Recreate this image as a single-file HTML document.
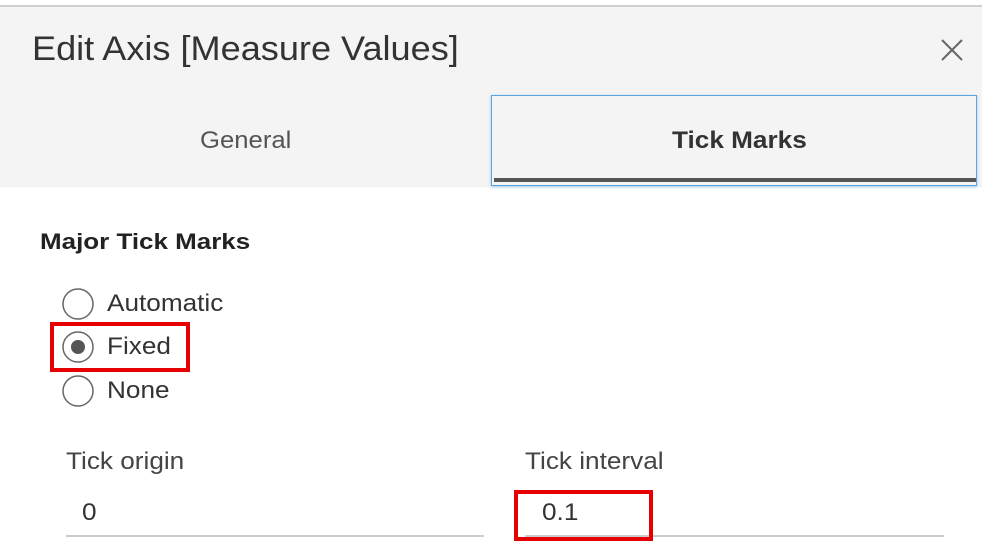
<!DOCTYPE html>
<html><head><style>
body{margin:0;width:982px;height:553px;background:#fff;position:relative;overflow:hidden;font-family:"Liberation Sans",sans-serif;}
.a{position:absolute;white-space:nowrap;transform-origin:left;}
.t{font-size:24px;color:#333;transform:scaleX(1.09);}
</style></head><body>
<div class="a" style="left:0;top:5px;width:982px;height:2px;background:#cfcfcf"></div>
<div class="a" style="left:0;top:7px;width:982px;height:180px;background:#f4f4f4"></div>
<div class="a" style="left:32px;top:30px;font-size:34px;color:#333;transform:scaleX(1.062)">Edit Axis [Measure Values]</div>
<svg class="a" style="left:940px;top:38px" width="24" height="24"><path d="M2 2L22 22M22 2L2 22" stroke="#666" stroke-width="2"/></svg>
<div class="a" style="left:491px;top:95px;width:484px;height:89px;border:1px solid #5aa5e0;background:#f4f4f4;box-shadow:0 1px 3px #9cc8ee"></div>
<div class="a" style="left:494px;top:178px;width:482px;height:4px;background:#555"></div>
<div class="a" style="left:200px;top:127px;font-size:24px;color:#555;transform:scaleX(1.07)">General</div>
<div class="a" style="left:672px;top:127px;font-size:24px;color:#333;font-weight:bold;transform:scaleX(1.09)">Tick Marks</div>
<div class="a" style="left:40px;top:229px;font-size:22px;color:#222;font-weight:bold;transform:scaleX(1.18)">Major Tick Marks</div>
<svg class="a" style="left:60px;top:286px" width="36" height="125">
<circle cx="18" cy="18" r="15" fill="#fff" stroke="#666" stroke-width="1.5"/>
<circle cx="18" cy="61" r="15" fill="#fff" stroke="#666" stroke-width="1.5"/>
<circle cx="18" cy="61" r="7" fill="#555"/>
<circle cx="18" cy="105" r="15" fill="#fff" stroke="#666" stroke-width="1.5"/>
</svg>
<div class="a t" style="left:107px;top:290px">Automatic</div>
<div class="a t" style="left:107px;top:333px">Fixed</div>
<div class="a t" style="left:107px;top:377px">None</div>
<div class="a" style="left:50px;top:322px;width:132px;height:42px;border:4px solid #e60000"></div>
<div class="a t" style="left:66px;top:448px;color:#444">Tick origin</div>
<div class="a t" style="left:525px;top:448px;color:#444">Tick interval</div>
<div class="a t" style="left:82px;top:499px">0</div>
<div class="a t" style="left:542px;top:499px">0.1</div>
<div class="a" style="left:66px;top:535px;width:418px;height:2px;background:#ccc"></div>
<div class="a" style="left:525px;top:535px;width:419px;height:2px;background:#ccc"></div>
<div class="a" style="left:514px;top:490px;width:131px;height:43px;border:4px solid #e60000"></div>
</body></html>
